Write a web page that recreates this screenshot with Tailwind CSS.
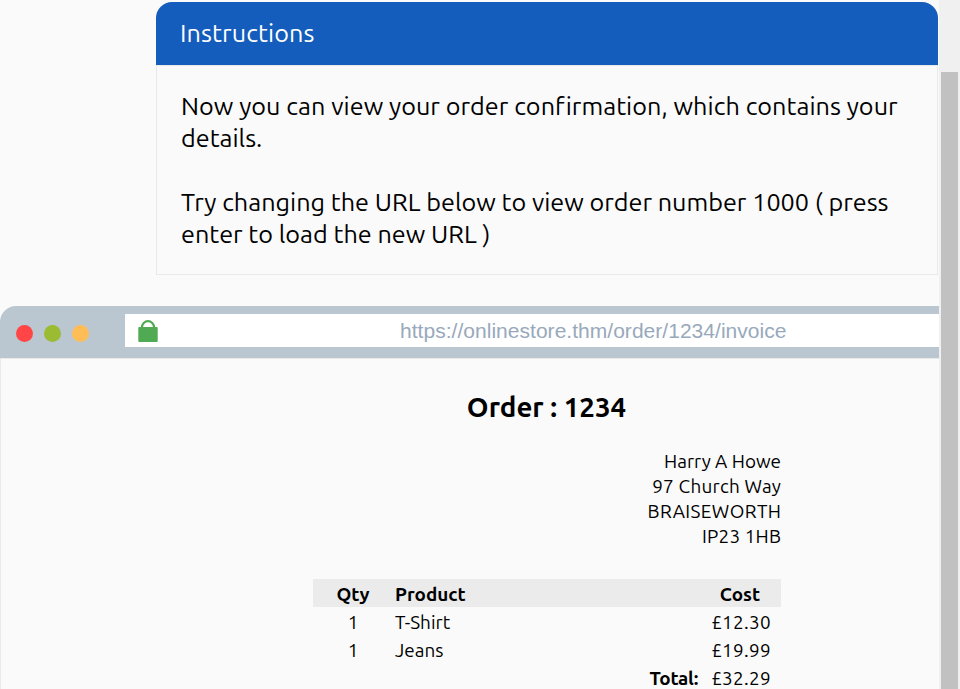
<!DOCTYPE html>
<html lang="en">
<head>
<meta charset="utf-8">
<title>Order : 1234</title>
<script src="https://cdn.jsdelivr.net/npm/@tailwindcss/browser@4"></script>
</head>
<body class="flex h-[689px] overflow-hidden bg-[#fafafa] font-['Ubuntu','Noto_Sans',sans-serif] text-black">
<main class="h-full w-[939px] shrink-0 overflow-hidden whitespace-nowrap">
  <section class="mt-0.5 ml-[156px] h-[273px] w-[782px]">
    <h2 class="flex h-[63px] items-center rounded-t-[16px] bg-[#145dbc] pl-6 text-[25.2px] text-white"><span class="tracking-[0.1px]">Instructions</span></h2>
    <div class="h-[210px] border border-[#e9e9e9] pt-6 pl-6 text-[25.2px] leading-8">
      <p><span class="tracking-[0.04px]">Now you can view your order confirmation, which contains your</span><br><span>details.</span></p>
      <p class="mt-8"><span>Try changing the URL below to view order number 1000 ( press</span><br><span>enter to load the new URL )</span></p>
    </div>
  </section>
  <section class="mt-[31px]">
    <header class="flex h-[52px] items-start rounded-tl-[16px] bg-[#bac7d0] pt-2">
      <div class="mt-[11px] ml-4 flex w-[109px] shrink-0 gap-[11px]">
        <i class="size-[17px] rounded-full bg-[#ff4545]"></i>
        <i class="size-[17px] rounded-full bg-[#9abb32]"></i>
        <i class="size-[17px] rounded-full bg-[#ffbd58]"></i>
      </div>
      <div class="flex h-[33px] flex-1 bg-white">
        <svg class="mt-[6px] ml-[13px] h-[22px] w-5 shrink-0" viewBox="0 0 20 22"><path d="M4 8V7.2a6 6 0 0 1 12 0V8" fill="none" stroke="#50a953" stroke-width="2.2"/><rect x=".3" y="7" width="19.4" height="15" rx="1" fill="#50a953"/></svg>
        <span class="ml-[242px] font-['Liberation_Sans',Arial,sans-serif] text-[21px] leading-[34px] tracking-[0.03px] text-[#98a9bc]">https://onlinestore.thm/order/1234/invoice</span>
      </div>
    </header>
    <div class="h-[331px] border-t border-l border-[#e9e9e9] pt-8 pl-[312px]">
      <div class="w-[468px]">
        <h1 class="-ml-px text-center text-[27.7px] leading-8 font-bold"><span>Order : 1234</span></h1>
        <address class="mt-[26px] text-right text-[18.9px] leading-[25px] not-italic"><span>Harry A Howe</span><br><span class="-mr-[0.2px] tracking-[0.25px]">97 Church Way</span><br><span class="-mr-[0.4px] tracking-[0.4px]">BRAISEWORTH</span><br><span class="-mr-[0.2px] tracking-[0.2px]">IP23 1HB</span></address>
        <table class="mt-[30px] w-full table-fixed border-collapse text-[18.9px] leading-7">
          <colgroup><col class="w-[82px]"><col><col class="w-[82px]"></colgroup>
          <thead><tr class="h-7 bg-[#ebebeb]"><th class="p-0 pt-0.5 pr-0.5 leading-[26px] font-bold">Qty</th><th class="p-0 pt-0.5 text-left leading-[26px] font-bold">Product</th><th class="p-0 pt-0.5 leading-[26px] font-bold">Cost</th></tr></thead>
          <tbody class="leading-[26px]">
            <tr class="h-7"><td class="p-0 pt-0.5 pr-0.5 text-center">1</td><td class="p-0 pt-0.5">T-Shirt</td><td class="p-0 pt-0.5 pl-0.5 text-center tracking-[0.3px]">£12.30</td></tr>
            <tr class="h-7"><td class="p-0 pt-0.5 pr-0.5 text-center">1</td><td class="p-0 pt-0.5">Jeans</td><td class="p-0 pt-0.5 pl-0.5 text-center tracking-[0.3px]">£19.99</td></tr>
            <tr class="h-7"><td></td><td class="p-0 pt-0.5 pr-px text-right font-bold tracking-[-0.3px]">Total:</td><td class="p-0 pt-0.5 pl-0.5 text-center tracking-[0.3px]">£32.29</td></tr>
          </tbody>
        </table>
      </div>
    </div>
  </section>
</main>
<aside class="h-full w-[21px] bg-[#f0f0f0] pt-[72px] pl-[2px]"><div class="h-[617px] w-[17px] bg-[#c1c1c1]"></div></aside>
</body>
</html>
